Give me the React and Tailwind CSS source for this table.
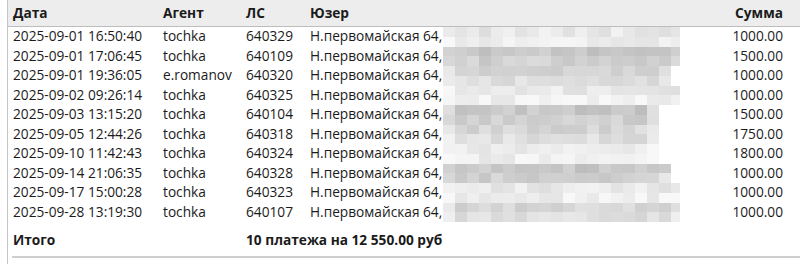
import React from 'react';

const rows = [
  ['2025-09-01 16:50:40', 'tochka', '640329', '1000.00', 256, 'light'],
  ['2025-09-01 17:06:45', 'tochka', '640109', '1500.00', 232, 'dark'],
  ['2025-09-01 19:36:05', 'e.romanov', '640320', '1000.00', 218, 'mid'],
  ['2025-09-02 09:26:14', 'tochka', '640325', '1000.00', 256, 'light'],
  ['2025-09-03 13:15:20', 'tochka', '640104', '1500.00', 208, 'dark'],
  ['2025-09-05 12:44:26', 'tochka', '640318', '1750.00', 208, 'mid'],
  ['2025-09-10 11:42:43', 'tochka', '640324', '1800.00', 214, 'light'],
  ['2025-09-14 21:06:35', 'tochka', '640328', '1000.00', 218, 'dark'],
  ['2025-09-17 15:00:28', 'tochka', '640323', '1000.00', 256, 'light'],
  ['2025-09-28 13:19:30', 'tochka', '640107', '1000.00', 232, 'mid'],
];

const base = { light: 232, mid: 214, dark: 200 };

// pixelated "blur" over the personal data
function Mosaic({ width, tone, seed }) {
  const cols = Math.ceil(width / 12);
  const cells = [];
  for (let r = 0; r < 2; r++) {
    for (let c = 0; c < cols; c++) {
      const n = Math.sin((seed + 1) * 91.7 + c * 12.9 + r * 47.3) * 43758.5;
      const f = n - Math.floor(n);
      const edge = c === 0 || c === cols - 1;
      let v = base[tone] + Math.round((f - 0.5) * 22) + (edge ? 14 : 0);
      if (r === 1) v += 8;
      v = Math.min(248, Math.max(180, v));
      cells.push(
        <div key={r + '-' + c} style={{ background: `rgb(${v},${v},${v})` }} />
      );
    }
  }
  return (
    <div
      className="grid h-full"
      style={{ width, gridTemplateColumns: `repeat(${cols}, 12px)`, gridTemplateRows: 'repeat(2, 1fr)' }}
    >
      {cells}
    </div>
  );
}

export default function App() {
  return (
    <div
      className="w-[800px] h-[264px] bg-white overflow-hidden text-[13.7px] text-[#1b1b1b]"
      style={{ fontFamily: '"Open Sans", "Noto Sans", sans-serif' }}
    >
      <div className="ml-[7px] h-full border-l border-[#c4c4c4] flex flex-col">
        <div className="h-[27px] shrink-0 flex items-center bg-[#ededed] border-b border-[#bdbdbd] font-bold">
          <div className="w-[155px] shrink-0 pl-[5px]">Дата</div>
          <div className="w-[83px] shrink-0">Агент</div>
          <div className="w-[64px] shrink-0">ЛС</div>
          <div className="flex-1 min-w-0">Юзер</div>
          <div className="w-[120px] shrink-0 pr-[17px] text-right">Сумма</div>
        </div>
        {rows.map((r, i) => (
          <div key={i} className="h-[19.5px] shrink-0 flex items-center">
            <div className="w-[155px] shrink-0 pl-[5px] whitespace-nowrap">{r[0]}</div>
            <div className="w-[83px] shrink-0">{r[1]}</div>
            <div className="w-[64px] shrink-0">{r[2]}</div>
            <div className="flex-1 min-w-0 overflow-hidden flex items-center h-full whitespace-nowrap">
              <span className="w-[133px] shrink-0">Н.первомайская 64,</span>
              <div className="h-full shrink-0">
                <Mosaic width={r[4]} tone={r[5]} seed={i} />
              </div>
            </div>
            <div className="w-[120px] shrink-0 pr-[17px] text-right">{r[3]}</div>
          </div>
        ))}
        <div className="h-[36px] shrink-0 flex items-center font-bold border-b-2 border-[#cfcfcf] ml-[4px] pt-[2px]">
          <div className="w-[234px] shrink-0 pl-[1px]">Итого</div>
          <div>10 платежа на 12 550.00 руб</div>
        </div>
      </div>
    </div>
  );
}
